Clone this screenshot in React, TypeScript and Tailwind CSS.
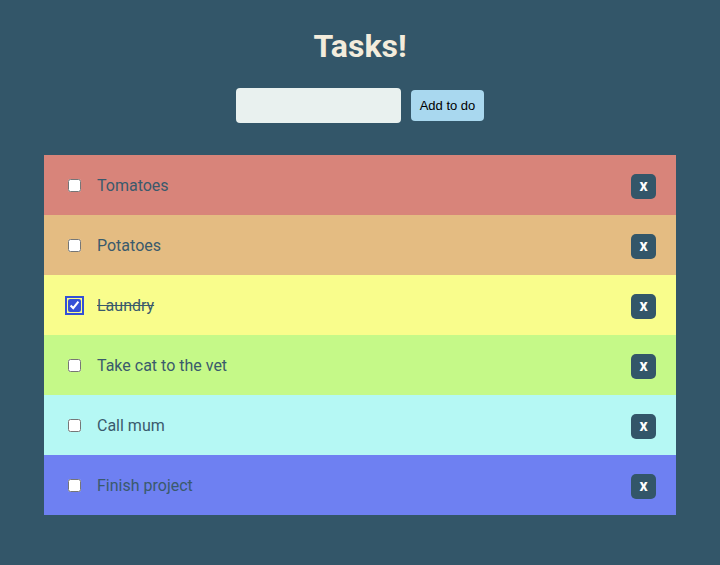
import { useState } from "react";

type Task = { id: number; text: string; done: boolean; color: string };

const initialTasks: Task[] = [
  { id: 1, text: "Tomatoes", done: false, color: "bg-[#d8847a]" },
  { id: 2, text: "Potatoes", done: false, color: "bg-[#e4bc82]" },
  { id: 3, text: "Laundry", done: true, color: "bg-[#f9fd8c]" },
  { id: 4, text: "Take cat to the vet", done: false, color: "bg-[#c5f988]" },
  { id: 5, text: "Call mum", done: false, color: "bg-[#b5f8f4]" },
  { id: 6, text: "Finish project", done: false, color: "bg-[#6e80f2]" },
];

const App = () => {
  const [tasks, setTasks] = useState(initialTasks);
  const [value, setValue] = useState("");

  const toggle = (id: number) =>
    setTasks(tasks.map((t) => (t.id === id ? { ...t, done: !t.done } : t)));

  return (
    <div className="min-h-screen bg-[#335669] font-['Roboto',sans-serif] pt-[26px]">
      <h1 className="text-center text-[32px] leading-[40px] font-bold text-[#f3ecdc]">Tasks!</h1>

      <div className="flex justify-center items-center gap-[10px] mt-[22px]">
        <input
          value={value}
          onChange={(e) => setValue(e.target.value)}
          className="w-[165px] h-[35px] rounded-[4px] bg-[#e9f1ef] px-2 outline-none"
        />
        <button className="w-[73px] h-[31px] rounded-[4px] bg-[#a9d8ef] text-[13px] text-black font-['Liberation_Sans',Arial,sans-serif]">
          Add to do
        </button>
      </div>

      {/* Task list */}
      <ul className="mx-[44px] mt-[32px]">
        {tasks.map((task) => (
          <li key={task.id} className={`${task.color} h-[60px] flex items-center pl-[24px] pr-[20px]`}>
            <input
              type="checkbox"
              checked={task.done}
              onChange={() => toggle(task.id)}
              className={`w-[13px] h-[13px] m-0 accent-[#3450d6] ${task.done ? "outline-2 outline-offset-1 outline-[#3450d6]" : ""}`}
            />
            <span
              className={`ml-[16px] mt-[2px] flex-1 text-[16px] text-[#3a5a6c] ${task.done ? "line-through" : ""}`}
            >
              {task.text}
            </span>
            <button
              onClick={() => setTasks(tasks.filter((t) => t.id !== task.id))}
              className="w-[25px] h-[25px] mt-[2px] rounded-[5px] bg-[#335669] text-white font-bold text-[16px] leading-none flex items-center justify-center pb-[1px]"
            >
              x
            </button>
          </li>
        ))}
      </ul>
    </div>
  );
};

export default App;
